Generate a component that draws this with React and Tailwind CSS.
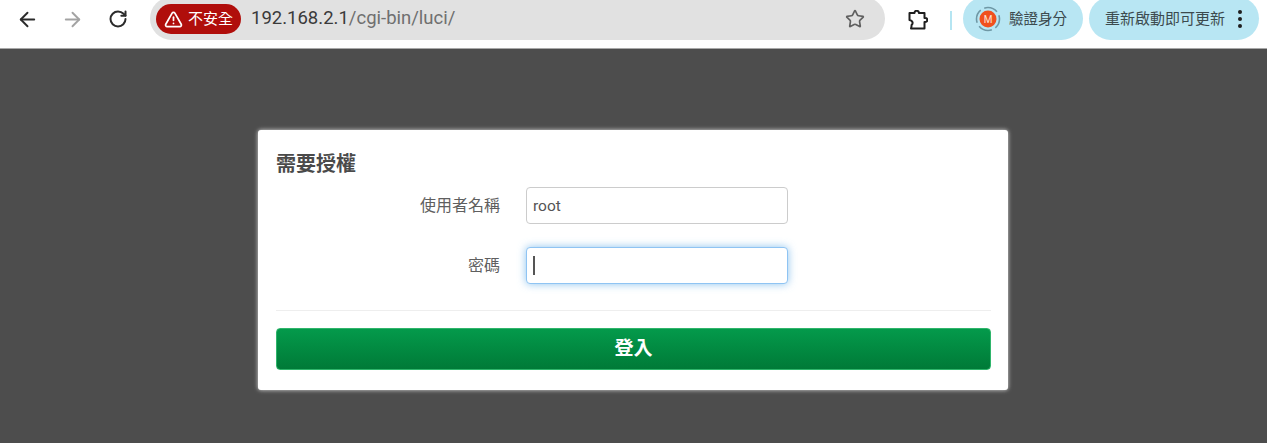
import { ArrowLeft, ArrowRight, RotateCw, Star, TriangleAlert } from 'lucide-react';

const font = 'font-["Roboto","Noto_Sans_CJK_TC",sans-serif]';

function ExtensionIcon() {
  return (
    <svg width="20" height="20" viewBox="0 0 20 20" fill="none" stroke="#1f1f1f" strokeWidth="2" strokeLinejoin="round">
      <path d="M1.5 3H6.5a2.2 2.2 0 0 1 4.4 0H16.5V8h.8a2 2 0 0 1 0 4h-.8V18.5H3C3.6 16.5 3.6 15.5 3.6 15C5.2 13.5 5 10.5 1.5 10Z" />
    </svg>
  );
}

function AccountAvatar() {
  return (
    <svg width="26" height="26" viewBox="0 0 26 26">
      <circle cx="13" cy="13" r="11.5" fill="none" stroke="#6f98a5" strokeWidth="1.6" strokeDasharray="14 4" strokeDashoffset="4" />
      <circle cx="13" cy="13" r="8.5" fill="#f0501e" />
      <text x="13" y="16.5" textAnchor="middle" fontSize="10" fill="#ffe0d4">M</text>
    </svg>
  );
}

function NavButton({ children }) {
  return <div className="w-[45px] flex justify-center">{children}</div>;
}

function Toolbar() {
  return (
    <div className="h-[49px] bg-white border-b border-[#a8a8a8] flex items-start overflow-hidden">
      <div className="flex items-center h-[38px] pl-[5px]">
        <NavButton><ArrowLeft size={23} strokeWidth={2} className="text-[#2b2b2b]" /></NavButton>
        <NavButton><ArrowRight size={23} strokeWidth={2} className="text-[#a3a3a3]" /></NavButton>
        <NavButton><RotateCw size={20} strokeWidth={2.4} className="text-[#2b2b2b]" /></NavButton>
      </div>
      <div className="ml-[10px] mt-[-3px] w-[735px] h-[43px] rounded-full bg-[#e1e1e1] flex items-center pl-[6px] pr-[20px]">
        <div className="h-[30px] w-[85px] rounded-full bg-[#b00e0b] flex items-center justify-center gap-[5px] text-white text-[15px] mt-[1px]">
          <TriangleAlert size={19} strokeWidth={2.2} />
          <span>不安全</span>
        </div>
        <div className="ml-[10px] text-[18.5px] text-[#3a3a3a] mt-[1px]">
          192.168.2.1<span className="text-[#6f6f6f]">/cgi-bin/luci/</span>
        </div>
        <Star size={20} strokeWidth={2} className="ml-auto text-[#606060]" />
      </div>
      <div className="h-[40px] flex items-center ml-[23px]">
        <ExtensionIcon />
        <div className="ml-[22px] w-[2px] h-[19px] bg-[#b5e5f2]" />
      </div>
      <div className="ml-[11px] mt-[-3px] w-[120px] h-[43px] rounded-full bg-[#b8e6f3] flex items-center pl-[12px] gap-[8px] text-[14.5px] text-[#3c4a4e]">
        <AccountAvatar />
        <span className="mt-[2px]">驗證身分</span>
      </div>
      <div className="ml-[6px] mt-[-3px] w-[170px] h-[43px] rounded-full bg-[#b8e6f3] flex items-center pl-[16px] text-[15px] text-[#3c4a4e]">
        <span className="mt-[2px]">重新啟動即可更新</span>
        <div className="ml-[13px] flex flex-col gap-[3px]">
          <div className="w-[4px] h-[4px] rounded-full bg-[#1f1f1f]" />
          <div className="w-[4px] h-[4px] rounded-full bg-[#1f1f1f]" />
          <div className="w-[4px] h-[4px] rounded-full bg-[#1f1f1f]" />
        </div>
      </div>
    </div>
  );
}

function Field({ label, children }) {
  return (
    <div className="flex items-center">
      <label className="w-[224px] text-right text-[16px] text-[#5f5f5f]">{label}</label>
      <div className="ml-[26px]">{children}</div>
    </div>
  );
}

export default function App() {
  return (
    <div className={`${font} w-[1267px] h-[443px] bg-[#4d4d4d] overflow-hidden`}>
      <Toolbar />
      <div className="w-[750px] h-[260px] ml-[258px] mt-[81px] bg-white rounded-[3px] shadow-[0_0_4px_rgba(255,255,255,0.8)] pl-[18px] pr-[17px]">
        <h3 className="pt-[22px] h-[57px] text-[20px] leading-[24px] font-bold text-[#4a4a4a]">需要授權</h3>
        <div className="flex flex-col gap-[23px]">
          <Field label="使用者名稱">
            <input
              defaultValue="root"
              readOnly
              className="block w-[262px] h-[37px] px-[6px] pt-[1px] rounded-[4px] border border-[#cccccc] bg-white text-[15.5px] text-[#555555] outline-none"
            />
          </Field>
          <Field label="密碼">
            <div className="w-[262px] h-[37px] px-[6px] rounded-[4px] border border-[#8fc4f3] bg-white shadow-[0_0_8px_rgba(102,175,233,0.75)] flex items-center">
              <div className="w-[1.5px] h-[19px] bg-[#555555]" />
            </div>
          </Field>
        </div>
        <div className="mt-[26px] h-[1px] bg-[#eeeeee]" />
        <button className="mt-[17px] block w-full h-[42px] pt-[1px] rounded-[4px] border border-[#2fb56b] bg-gradient-to-b from-[#049a4b] to-[#007a37] text-white text-[19px] font-bold">
          登入
        </button>
      </div>
    </div>
  );
}
